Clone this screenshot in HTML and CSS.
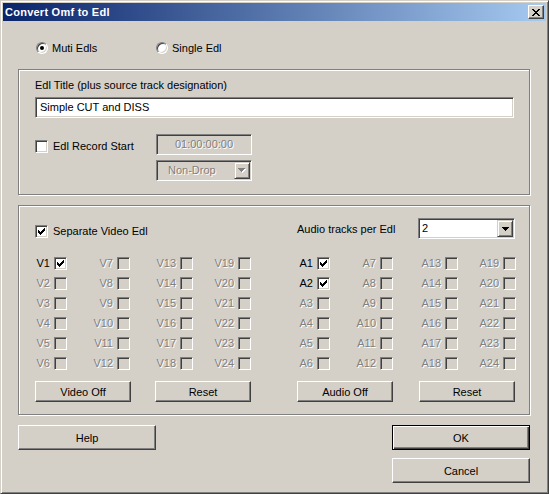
FILE: index.html
```html
<!DOCTYPE html>
<html>
<head>
<meta charset="utf-8">
<title>Convert Omf to Edl</title>
<link rel="stylesheet" href="styles.css">
</head>
<body>
<div class="window">
  <div class="titlebar">
    <span class="title">Convert Omf to Edl</span>
    <span class="close"><svg width="8" height="7" viewBox="0 0 8 7" shape-rendering="crispEdges"><path d="M0 0h2v1h-2zM6 0h2v1h-2zM1 1h2v1h-2zM5 1h2v1h-2zM2 2h4v1h-4zM3 3h2v1h-2zM2 4h4v1h-4zM1 5h2v1h-2zM5 5h2v1h-2zM0 6h2v1h-2zM6 6h2v1h-2z" fill="#000"/></svg></span>
  </div>
  <div class="content">
    <div class="radios">
      <div class="radio-item first"><span class="radio checked"></span><span>Muti Edls</span></div>
      <div class="radio-item"><span class="radio"></span><span>Single Edl</span></div>
    </div>

    <div class="group g1">
      <div class="lbl">Edl Title (plus source track designation)</div>
      <div class="textbox">Simple CUT and DISS</div>
      <div class="rec-row">
        <div class="rec-left"><span class="cb"></span><span class="lbl">Edl Record Start</span></div>
        <div class="rec-right">
          <div class="field dis">01:00:00:00</div>
          <div class="combo dis"><span class="combo-text pad-wide">Non-Drop</span><span class="combo-btn"><svg width="8" height="5" viewBox="0 0 8 5" shape-rendering="crispEdges"><path d="M1 1h7v1h-7zM2 2h5v1h-5zM3 3h3v1h-3zM4 4h1v1h-1z" fill="#fff"/><path d="M0 0h7v1h-7zM1 1h5v1h-5zM2 2h3v1h-3zM3 3h1v1h-1z" fill="#808080"/></svg></span></div>
        </div>
      </div>
    </div>

    <div class="group g2">
      <div class="half">
        <div class="vhead"><span class="cb"><svg class="chk" width="7" height="7" viewBox="0 0 7 7" shape-rendering="crispEdges"><path d="M6 0h1v1h-1zM5 1h2v1h-2zM0 2h1v1h-1zM4 2h3v1h-3zM0 3h2v1h-2zM3 3h3v1h-3zM0 4h5v1h-5zM1 5h3v1h-3zM2 6h1v1h-1z" fill="#000"/></svg></span><span class="lbl">Separate Video Edl</span></div>
        <div class="tgrid vgrid">
          <div class="cell"><span class="tl">V1</span><span class="cb"><svg class="chk" width="7" height="7" viewBox="0 0 7 7" shape-rendering="crispEdges"><path d="M6 0h1v1h-1zM5 1h2v1h-2zM0 2h1v1h-1zM4 2h3v1h-3zM0 3h2v1h-2zM3 3h3v1h-3zM0 4h5v1h-5zM1 5h3v1h-3zM2 6h1v1h-1z" fill="#000"/></svg></span></div>
          <div class="cell"><span class="tl dt">V2</span><span class="cb dis"></span></div>
          <div class="cell"><span class="tl dt">V3</span><span class="cb dis"></span></div>
          <div class="cell"><span class="tl dt">V4</span><span class="cb dis"></span></div>
          <div class="cell"><span class="tl dt">V5</span><span class="cb dis"></span></div>
          <div class="cell"><span class="tl dt">V6</span><span class="cb dis"></span></div>
          <div class="cell"><span class="tl dt">V7</span><span class="cb dis"></span></div>
          <div class="cell"><span class="tl dt">V8</span><span class="cb dis"></span></div>
          <div class="cell"><span class="tl dt">V9</span><span class="cb dis"></span></div>
          <div class="cell"><span class="tl dt">V10</span><span class="cb dis"></span></div>
          <div class="cell"><span class="tl dt">V11</span><span class="cb dis"></span></div>
          <div class="cell"><span class="tl dt">V12</span><span class="cb dis"></span></div>
          <div class="cell"><span class="tl dt">V13</span><span class="cb dis"></span></div>
          <div class="cell"><span class="tl dt">V14</span><span class="cb dis"></span></div>
          <div class="cell"><span class="tl dt">V15</span><span class="cb dis"></span></div>
          <div class="cell"><span class="tl dt">V16</span><span class="cb dis"></span></div>
          <div class="cell"><span class="tl dt">V17</span><span class="cb dis"></span></div>
          <div class="cell"><span class="tl dt">V18</span><span class="cb dis"></span></div>
          <div class="cell"><span class="tl dt">V19</span><span class="cb dis"></span></div>
          <div class="cell"><span class="tl dt">V20</span><span class="cb dis"></span></div>
          <div class="cell"><span class="tl dt">V21</span><span class="cb dis"></span></div>
          <div class="cell"><span class="tl dt">V22</span><span class="cb dis"></span></div>
          <div class="cell"><span class="tl dt">V23</span><span class="cb dis"></span></div>
          <div class="cell"><span class="tl dt">V24</span><span class="cb dis"></span></div>
        </div>
        <div class="btns vbtns"><button class="btn">Video Off</button><button class="btn">Reset</button></div>
      </div>
      <div class="half">
        <div class="ahead"><span class="alabel">Audio tracks per Edl</span><div class="combo sel"><span class="combo-text">2</span><span class="combo-btn"><svg width="7" height="4" viewBox="0 0 7 4" shape-rendering="crispEdges"><path d="M0 0h7v1h-7zM1 1h5v1h-5zM2 2h3v1h-3zM3 3h1v1h-1z" fill="#000"/></svg></span></div></div>
        <div class="tgrid agrid">
          <div class="cell"><span class="tl">A1</span><span class="cb"><svg class="chk" width="7" height="7" viewBox="0 0 7 7" shape-rendering="crispEdges"><path d="M6 0h1v1h-1zM5 1h2v1h-2zM0 2h1v1h-1zM4 2h3v1h-3zM0 3h2v1h-2zM3 3h3v1h-3zM0 4h5v1h-5zM1 5h3v1h-3zM2 6h1v1h-1z" fill="#000"/></svg></span></div>
          <div class="cell"><span class="tl">A2</span><span class="cb"><svg class="chk" width="7" height="7" viewBox="0 0 7 7" shape-rendering="crispEdges"><path d="M6 0h1v1h-1zM5 1h2v1h-2zM0 2h1v1h-1zM4 2h3v1h-3zM0 3h2v1h-2zM3 3h3v1h-3zM0 4h5v1h-5zM1 5h3v1h-3zM2 6h1v1h-1z" fill="#000"/></svg></span></div>
          <div class="cell"><span class="tl dt">A3</span><span class="cb dis"></span></div>
          <div class="cell"><span class="tl dt">A4</span><span class="cb dis"></span></div>
          <div class="cell"><span class="tl dt">A5</span><span class="cb dis"></span></div>
          <div class="cell"><span class="tl dt">A6</span><span class="cb dis"></span></div>
          <div class="cell"><span class="tl dt">A7</span><span class="cb dis"></span></div>
          <div class="cell"><span class="tl dt">A8</span><span class="cb dis"></span></div>
          <div class="cell"><span class="tl dt">A9</span><span class="cb dis"></span></div>
          <div class="cell"><span class="tl dt">A10</span><span class="cb dis"></span></div>
          <div class="cell"><span class="tl dt">A11</span><span class="cb dis"></span></div>
          <div class="cell"><span class="tl dt">A12</span><span class="cb dis"></span></div>
          <div class="cell"><span class="tl dt">A13</span><span class="cb dis"></span></div>
          <div class="cell"><span class="tl dt">A14</span><span class="cb dis"></span></div>
          <div class="cell"><span class="tl dt">A15</span><span class="cb dis"></span></div>
          <div class="cell"><span class="tl dt">A16</span><span class="cb dis"></span></div>
          <div class="cell"><span class="tl dt">A17</span><span class="cb dis"></span></div>
          <div class="cell"><span class="tl dt">A18</span><span class="cb dis"></span></div>
          <div class="cell"><span class="tl dt">A19</span><span class="cb dis"></span></div>
          <div class="cell"><span class="tl dt">A20</span><span class="cb dis"></span></div>
          <div class="cell"><span class="tl dt">A21</span><span class="cb dis"></span></div>
          <div class="cell"><span class="tl dt">A22</span><span class="cb dis"></span></div>
          <div class="cell"><span class="tl dt">A23</span><span class="cb dis"></span></div>
          <div class="cell"><span class="tl dt">A24</span><span class="cb dis"></span></div>
        </div>
        <div class="btns abtns"><button class="btn">Audio Off</button><button class="btn">Reset</button></div>
      </div>
    </div>

    <div class="footer">
      <button class="btn big">Help</button>
      <div class="foot-right">
        <button class="btn big ok">OK</button>
        <button class="btn big">Cancel</button>
      </div>
    </div>
  </div>
</div>
</body>
</html>
```
FILE: styles.css
```css
* { box-sizing: border-box; }
html, body { margin: 0; padding: 0; }
body {
  width: 549px;
  height: 494px;
  overflow: hidden;
  background: #d4d0c8;
  font-family: "Liberation Sans", Arial, sans-serif;
  font-size: 11px;
  color: #000;
}
.window {
  width: 549px;
  height: 494px;
  background: #d4d0c8;
  border: 1px solid;
  border-color: #d4d0c8 #404040 #404040 #d4d0c8;
  box-shadow: inset 1px 1px #fff, inset -1px -1px #808080;
  padding: 2px;
}
.titlebar {
  height: 18px;
  background: linear-gradient(90deg, #0a246a, #a6caf0);
  display: flex;
  align-items: center;
  justify-content: space-between;
  padding: 0 2px;
}
.title {
  color: #fff;
  font-weight: bold;
  line-height: 13px;
  letter-spacing: 0.25px;
}
.close {
  width: 16px;
  height: 14px;
  background: #d4d0c8;
  border: 1px solid;
  border-color: #fff #404040 #404040 #fff;
  box-shadow: inset -1px -1px #808080;
  display: flex;
  align-items: center;
  justify-content: center;
}
.close svg { display: block; margin-top: 1px; }
.content { padding: 0 16px 0 15px; }

.radios {
  display: flex;
  align-items: center;
  height: 12px;
  margin-top: 21px;
  padding-left: 18px;
}
.radio-item {
  display: flex;
  align-items: center;
  gap: 4px;
  line-height: 13px;
}
.radio-item.first { width: 120px; }
.radio {
  width: 12px;
  height: 12px;
  border-radius: 50%;
  border: 1px solid;
  border-color: #808080 #fff #fff #808080;
  box-shadow: inset 1px 1px #404040, inset -1px -1px #d4d0c8;
  background: #fff;
  display: flex;
  align-items: center;
  justify-content: center;
}
.radio.checked::after {
  content: "";
  width: 4px;
  height: 4px;
  border-radius: 50%;
  background: #000;
}

.group {
  border: 1px solid #808080;
  box-shadow: 1px 1px #fff, inset 1px 1px #fff;
}
.g1 {
  margin-top: 15px;
  padding: 9px 15px 13px 16px;
}
.lbl { line-height: 13px; }
.textbox, .field, .combo {
  border: 1px solid;
  border-color: #808080 #fff #fff #808080;
  box-shadow: inset 1px 1px #404040, inset -1px -1px #d4d0c8;
  background: #fff;
}
.textbox {
  margin-top: 5px;
  height: 21px;
  line-height: 19px;
  padding-left: 4px;
}
.rec-row {
  display: flex;
  margin-top: 16px;
}
.rec-left {
  width: 121px;
  height: 13px;
  margin-top: 6px;
  display: flex;
  align-items: center;
  gap: 5px;
}
.rec-right {
  width: 96px;
  display: flex;
  flex-direction: column;
  gap: 5px;
}
.field {
  height: 21px;
  line-height: 19px;
  text-align: center;
}
.dis {
  background: #d4d0c8;
  color: #808080;
  text-shadow: 1px 1px #fff;
}
.combo {
  height: 21px;
  padding: 1px;
  display: flex;
}
.combo-text {
  flex: 1;
  line-height: 17px;
  padding-left: 2px;
}
.combo-text.pad-wide { padding-left: 10px; }
.combo-btn {
  width: 16px;
  background: #d4d0c8;
  border: 1px solid;
  border-color: #d4d0c8 #404040 #404040 #d4d0c8;
  box-shadow: inset 1px 1px #fff, inset -1px -1px #808080;
  display: flex;
  align-items: center;
  justify-content: center;
}
.combo-btn svg { display: block; }

.cb {
  width: 13px;
  height: 13px;
  flex: none;
  border: 1px solid;
  border-color: #808080 #fff #fff #808080;
  box-shadow: inset 1px 1px #404040, inset -1px -1px #d4d0c8;
  background: #fff;
}
.cb.dis { background: #d4d0c8; }
.chk { display: block; margin: 2px 0 0 2px; }

.g2 {
  margin-top: 10px;
  padding: 12px 0 12px 16px;
  display: grid;
  grid-template-columns: 216px 219px;
  column-gap: 46px;
}
.vhead {
  height: 21px;
  padding-top: 7px;
  display: flex;
  align-items: flex-start;
  gap: 5px;
}
.ahead {
  height: 21px;
  display: flex;
  align-items: center;
}
.alabel {
  width: 121px;
  line-height: 13px;
  padding-top: 2px;
}
.combo.sel { width: 97px; }
.tgrid {
  display: grid;
  grid-auto-flow: column;
  grid-template-rows: repeat(6, 13px);
  row-gap: 7px;
  margin-top: 18px;
}
.vgrid { grid-template-columns: 32px 63px 63px 58px; }
.agrid { grid-template-columns: 33px 63px 65px 58px; }
.cell {
  display: flex;
  justify-content: flex-end;
  align-items: center;
  gap: 4px;
}
.tl { line-height: 13px; }
.dt { color: #808080; text-shadow: 1px 1px #fff; }
.btns {
  display: flex;
  margin-top: 11px;
}
.vbtns { gap: 24px; }
.abtns { gap: 26px; }
.btn {
  width: 96px;
  height: 21px;
  padding: 0;
  margin: 0;
  font: 11px "Liberation Sans", Arial, sans-serif;
  color: #000;
  background: #d4d0c8;
  border: 1px solid;
  border-color: #fff #404040 #404040 #fff;
  box-shadow: inset -1px -1px #808080;
  border-radius: 0;
}
.btn.big {
  width: 138px;
  height: 25px;
}
.btn.ok {
  border: 1px solid #000;
  box-shadow: inset 1px 1px #fff, inset -1px -1px #404040, inset -2px -2px #808080;
}
.footer {
  display: flex;
  justify-content: space-between;
  align-items: flex-start;
  margin-top: 10px;
}
.foot-right {
  display: flex;
  flex-direction: column;
  gap: 8px;
}
```
